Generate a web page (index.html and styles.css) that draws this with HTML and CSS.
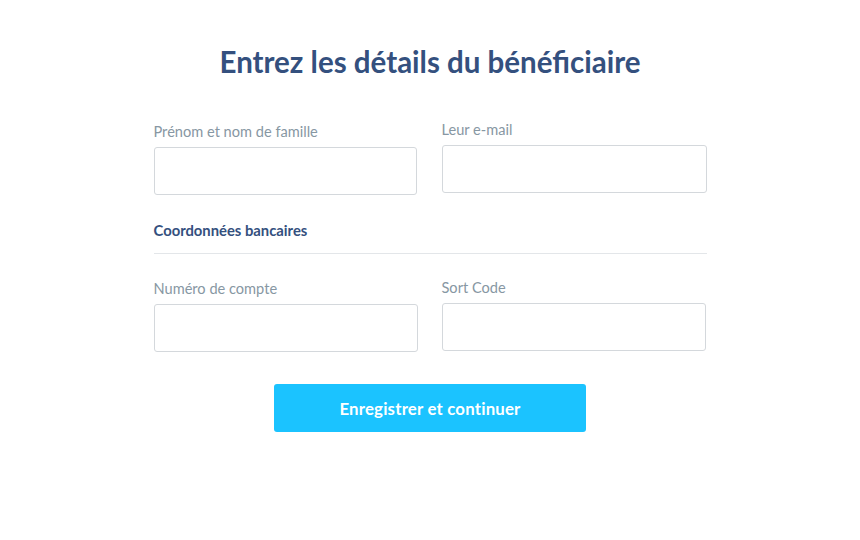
FILE: index.html
```html
<!DOCTYPE html>
<html lang="fr">
<head>
<meta charset="utf-8">
<title>Bénéficiaire</title>
<link rel="stylesheet" href="styles.css">
</head>
<body>
<main class="page">
  <h1 class="title">Entrez les détails du bénéficiaire</h1>
  <form class="form">
    <div class="grid">
      <div class="field field--low">
        <label class="label">Prénom et nom de famille</label>
        <div class="input"></div>
      </div>
      <div class="field">
        <label class="label">Leur e-mail</label>
        <div class="input"></div>
      </div>
    </div>
    <div class="section">
      <h2 class="section-title">Coordonnées bancaires</h2>
    </div>
    <div class="grid grid--bank">
      <div class="field field--low">
        <label class="label">Numéro de compte</label>
        <div class="input"></div>
      </div>
      <div class="field field--mid">
        <label class="label">Sort Code</label>
        <div class="input"></div>
      </div>
    </div>
    <div class="actions">
      <button type="button" class="button">Enregistrer et continuer</button>
    </div>
  </form>
</main>
</body>
</html>
```

FILE: styles.css
```css
* { box-sizing: border-box; }
html, body { margin: 0; padding: 0; background: #fff; }
body { font-family: Lato, "Noto Sans", sans-serif; }
.page {
  width: 553px;
  margin: 0 auto;
  padding-top: 42px;
}
.title {
  margin: 0;
  text-align: center;
  font-size: 29.5px;
  font-weight: 700;
  color: #34507e;
  line-height: 40px;
}
.form { margin-top: 39px; }
.grid {
  display: grid;
  grid-template-columns: 263px 265px;
  column-gap: 25px;
  align-items: start;
}
.grid--bank {
  grid-template-columns: 264px 264px;
  column-gap: 24px;
}
.field { display: flex; flex-direction: column; }
.field--low { margin-top: 2px; }
.field--mid { margin-top: 1px; }
.label {
  font-size: 14.6px;
  color: #8797a3;
  line-height: 18px;
  margin-bottom: 6px;
}
.input {
  height: 48px;
  border: 1px solid #d4d8dc;
  border-radius: 3px;
  background: #fff;
}
.section {
  margin-top: 26px;
  margin-bottom: 24px;
  border-bottom: 1px solid #e3e6e9;
  padding-bottom: 14px;
}
.section-title {
  margin: 0;
  font-size: 14.8px;
  font-weight: 700;
  color: #34507e;
  line-height: 18px;
}
.actions {
  display: flex;
  justify-content: center;
  margin-top: 32px;
}
.button {
  width: 312px;
  height: 48px;
  border: none;
  border-radius: 3px;
  background: #1bc3ff;
  color: #fff;
  font-family: Lato, "Noto Sans", sans-serif;
  font-size: 16.8px;
  font-weight: 700;
  letter-spacing: 0.2px;
}
```
